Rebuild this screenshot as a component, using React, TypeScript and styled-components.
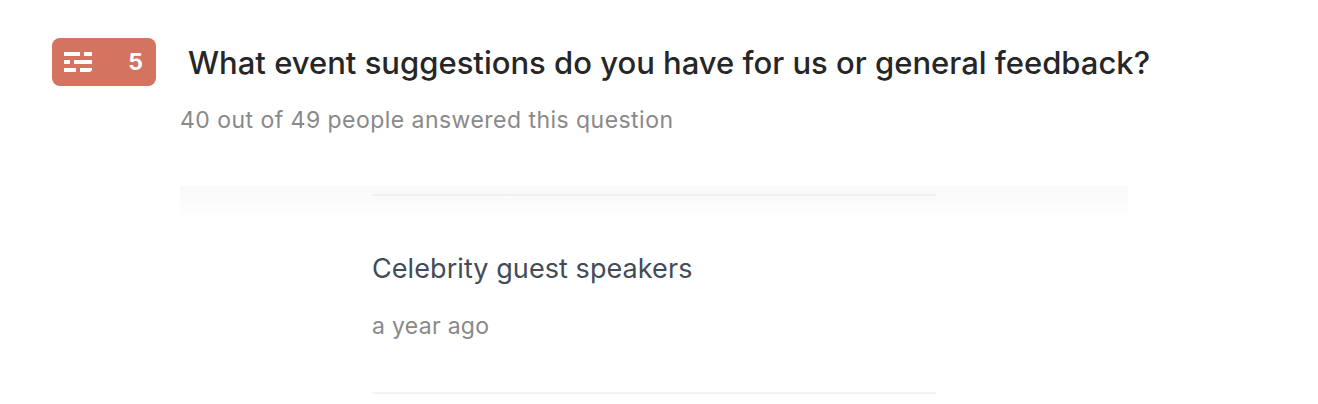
import React from "react";
import styled, { createGlobalStyle } from "styled-components";

const GlobalStyle = createGlobalStyle`
  * { box-sizing: border-box; }
  body { margin: 0; background: #fff; font-family: Inter, "Liberation Sans", sans-serif; }
`;
const Page = styled.main`
  height: 404px;
  overflow: hidden;
  padding: 38px 0 0 52px;
`;
const Header = styled.header`
  display: flex;
  align-items: center;
  height: 48px;
`;
const Badge = styled.div`
  display: flex;
  align-items: center;
  justify-content: space-between;
  width: 104px;
  height: 48px;
  padding: 0 13px 0 12px;
  border-radius: 8px;
  background: #d57361;
  color: #fff;
  font-size: 23px;
  font-weight: 700;
`;
const Title = styled.h1`
  margin: 0 0 0 32px;
  padding-top: 2px;
  font-size: 31px;
  line-height: 48px;
  font-weight: 500;
  color: #262627;
  white-space: nowrap;
`;
const Summary = styled.p`
  margin: 16px 0 0 128px;
  font-size: 23px;
  line-height: 36px;
  letter-spacing: 0.46px;
  color: #898989;
  white-space: nowrap;
`;
const Responses = styled.section`
  width: 948px;
  height: 218px;
  margin: 48px 0 0 128px;
  padding: 8px 192px 0;
  background: linear-gradient(#f9f9f9, #fbfbfb 14px, #fff) no-repeat 0 0 / 100% 34px;
`;
const Response = styled.article<{ $rule: string }>`
  height: 198px;
  border-top: 2px solid ${({ $rule }) => $rule};
  padding-top: 51px;
`;
const Answer = styled.p`
  margin: 0;
  font-size: 27px;
  line-height: 44px;
  letter-spacing: 0.07px;
  color: #434b57;
`;
const Time = styled.p`
  margin: 17px 0 0;
  font-size: 23px;
  line-height: 36px;
  letter-spacing: 0.3px;
  color: #898989;
`;

const LongTextIcon = () => (
  <svg width="28" height="20" viewBox="0 0 28 20" fill="#fff" aria-hidden="true">
    <path d="M0 0h16v4H0zM20 0h8v4h-8zM0 8h6v4H0zM10 8h18v4H10zM0 16h12v4H0zM16 16h12v1a3 3 0 0 1-3 3h-9z" />
  </svg>
);

export default function App() {
  return (
    <Page>
      <GlobalStyle />
      <Header>
        <Badge><LongTextIcon /><span>5</span></Badge>
        <Title>What event suggestions do you have for us or general feedback?</Title>
      </Header>
      <Summary>40 out of 49 people answered this question</Summary>
      <Responses>
        <Response $rule="#f0f0f0">
          <Answer>Celebrity guest speakers</Answer>
          <Time>a year ago</Time>
        </Response>
        <Response $rule="#f4f4f4" />
      </Responses>
    </Page>
  );
}
